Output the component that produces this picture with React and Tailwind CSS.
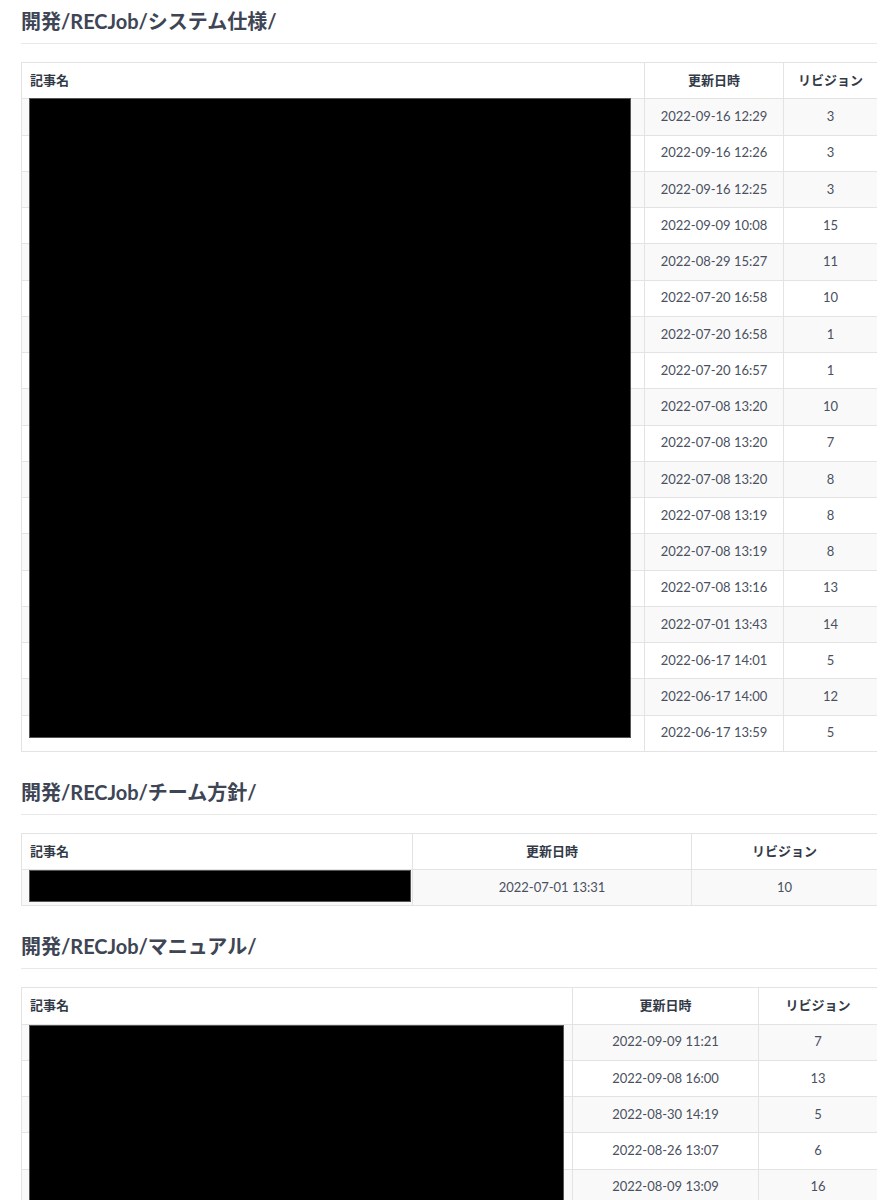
const sections = [
  {
    title: '開発/RECJob/システム仕様/',
    cols: ['w-[623px]', 'w-[139px]', 'w-[94px]'],
    redact: 'top-[36px] h-[640px] w-[602px]',
    rows: [
      ['2022-09-16 12:29', 3],
      ['2022-09-16 12:26', 3],
      ['2022-09-16 12:25', 3],
      ['2022-09-09 10:08', 15],
      ['2022-08-29 15:27', 11],
      ['2022-07-20 16:58', 10],
      ['2022-07-20 16:58', 1],
      ['2022-07-20 16:57', 1],
      ['2022-07-08 13:20', 10],
      ['2022-07-08 13:20', 7],
      ['2022-07-08 13:20', 8],
      ['2022-07-08 13:19', 8],
      ['2022-07-08 13:19', 8],
      ['2022-07-08 13:16', 13],
      ['2022-07-01 13:43', 14],
      ['2022-06-17 14:01', 5],
      ['2022-06-17 14:00', 12],
      ['2022-06-17 13:59', 5],
    ],
  },
  {
    title: '開発/RECJob/チーム方針/',
    cols: ['w-[391px]', 'w-[279px]', 'w-[186px]'],
    redact: 'top-[37px] h-[32px] w-[382px]',
    rows: [['2022-07-01 13:31', 10]],
  },
  {
    title: '開発/RECJob/マニュアル/',
    cols: ['w-[551px]', 'w-[186px]', 'w-[119px]'],
    redact: 'top-[38px] h-[220px] w-[535px]',
    rows: [
      ['2022-09-09 11:21', 7],
      ['2022-09-08 16:00', 13],
      ['2022-08-30 14:19', 5],
      ['2022-08-26 13:07', 6],
      ['2022-08-09 13:09', 16],
    ],
  },
];

function Section({ title, cols, redact, rows }) {
  return (
    <section className="mb-[28px]">
      <h2 className="border-b border-[#e8e8e8] pb-[10px] text-[20px] font-bold leading-[24px] text-[#3e4555]">
        {title}
      </h2>
      <div className="relative mt-[18px] overflow-hidden">
        <table className="w-full table-fixed border-collapse border border-[#e3e3e3] text-[13px] text-[#4a505e]">
          <colgroup>
            {cols.map((c, i) => (
              <col key={i} className={c} />
            ))}
          </colgroup>
          <thead>
            <tr className="h-[36.25px] bg-white">
              <th className="border border-[#e3e3e3] px-[8px] text-left font-bold text-[#333a47]">記事名</th>
              <th className="border border-[#e3e3e3] px-[8px] text-center font-bold text-[#333a47]">更新日時</th>
              <th className="border border-[#e3e3e3] px-[8px] text-center font-bold text-[#333a47]">リビジョン</th>
            </tr>
          </thead>
          <tbody>
            {rows.map(([date, rev], i) => (
              <tr key={i} className={i % 2 === 0 ? 'h-[36.25px] bg-[#f9f9f9]' : 'h-[36.25px] bg-white'}>
                <td className="border border-[#e3e3e3] px-[8px]"></td>
                <td className="border border-[#e3e3e3] px-[8px] text-center">{date}</td>
                <td className="border border-[#e3e3e3] px-[8px] text-center">{rev}</td>
              </tr>
            ))}
          </tbody>
        </table>
        <div className={`absolute left-[8px] border border-[#555] bg-black ${redact}`}></div>
      </div>
    </section>
  );
}

export default function App() {
  return (
    <div className="min-h-[1200px] bg-white pl-[21px] pr-[16px] pt-[9px] font-['Lato','Noto_Sans_CJK_JP',sans-serif]">
      {sections.map((s) => (
        <Section key={s.title} {...s} />
      ))}
    </div>
  );
}
